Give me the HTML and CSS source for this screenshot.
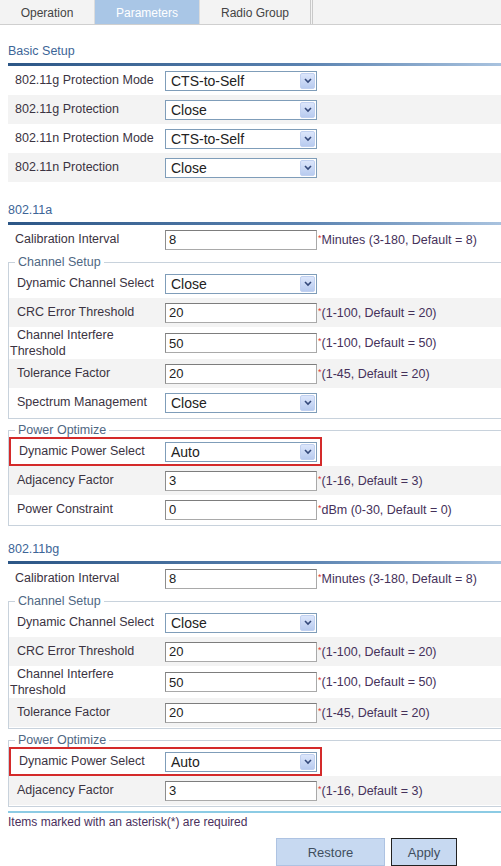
FILE: index.html
```html
<!DOCTYPE html>
<html lang="en">
<head>
  <meta charset="UTF-8">
  <title>Radio Parameters</title>
  <link rel="stylesheet" href="styles.css">
</head>
<body>
  <div class="tabs">
    <a class="tab tab-op">Operation</a>
    <a class="tab tab-param active">Parameters</a>
    <a class="tab tab-group">Radio Group</a>
    <div class="tab-rest"></div>
  </div>

  <div class="main">
    <h2 class="sec-title">Basic Setup</h2>
    <div class="rows">
      <div class="row"><label>802.11g Protection Mode</label><div class="select"><span>CTS-to-Self</span><i class="drop"><svg viewBox="0 0 8 6" width="8" height="6"><path d="M1 1l3 3 3-3" fill="none" stroke="#34497a" stroke-width="1.6"/></svg></i></div></div>
      <div class="row"><label>802.11g Protection</label><div class="select"><span>Close</span><i class="drop"><svg viewBox="0 0 8 6" width="8" height="6"><path d="M1 1l3 3 3-3" fill="none" stroke="#34497a" stroke-width="1.6"/></svg></i></div></div>
      <div class="row"><label>802.11n Protection Mode</label><div class="select"><span>CTS-to-Self</span><i class="drop"><svg viewBox="0 0 8 6" width="8" height="6"><path d="M1 1l3 3 3-3" fill="none" stroke="#34497a" stroke-width="1.6"/></svg></i></div></div>
      <div class="row"><label>802.11n Protection</label><div class="select"><span>Close</span><i class="drop"><svg viewBox="0 0 8 6" width="8" height="6"><path d="M1 1l3 3 3-3" fill="none" stroke="#34497a" stroke-width="1.6"/></svg></i></div></div>
    </div>

    <!-- 802.11a -->
    <h2 class="sec-title">802.11a</h2>
    <div class="row"><label>Calibration Interval</label><input type="text" value="8"><span class="hint"><em>*</em>Minutes (3-180, Default = 8)</span></div>
    <fieldset>
      <legend>Channel Setup</legend>
      <div class="row"><label>Dynamic Channel Select</label><div class="select"><span>Close</span><i class="drop"><svg viewBox="0 0 8 6" width="8" height="6"><path d="M1 1l3 3 3-3" fill="none" stroke="#34497a" stroke-width="1.6"/></svg></i></div></div>
      <div class="row"><label>CRC Error Threshold</label><input type="text" value="20"><span class="hint"><em>*</em>(1-100, Default = 20)</span></div>
      <div class="row"><label class="two">Channel Interfere Threshold</label><input type="text" value="50"><span class="hint"><em>*</em>(1-100, Default = 50)</span></div>
      <div class="row"><label>Tolerance Factor</label><input type="text" value="20"><span class="hint"><em>*</em>(1-45, Default = 20)</span></div>
      <div class="row"><label>Spectrum Management</label><div class="select"><span>Close</span><i class="drop"><svg viewBox="0 0 8 6" width="8" height="6"><path d="M1 1l3 3 3-3" fill="none" stroke="#34497a" stroke-width="1.6"/></svg></i></div></div>
    </fieldset>
    <fieldset>
      <legend>Power Optimize</legend>
      <div class="row mark"><label>Dynamic Power Select</label><div class="select"><span>Auto</span><i class="drop"><svg viewBox="0 0 8 6" width="8" height="6"><path d="M1 1l3 3 3-3" fill="none" stroke="#34497a" stroke-width="1.6"/></svg></i></div></div>
      <div class="row"><label>Adjacency Factor</label><input type="text" value="3"><span class="hint"><em>*</em>(1-16, Default = 3)</span></div>
      <div class="row"><label>Power Constraint</label><input type="text" value="0"><span class="hint"><em>*</em>dBm (0-30, Default = 0)</span></div>
    </fieldset>

    <!-- 802.11bg -->
    <h2 class="sec-title">802.11bg</h2>
    <div class="row"><label>Calibration Interval</label><input type="text" value="8"><span class="hint"><em>*</em>Minutes (3-180, Default = 8)</span></div>
    <fieldset>
      <legend>Channel Setup</legend>
      <div class="row"><label>Dynamic Channel Select</label><div class="select"><span>Close</span><i class="drop"><svg viewBox="0 0 8 6" width="8" height="6"><path d="M1 1l3 3 3-3" fill="none" stroke="#34497a" stroke-width="1.6"/></svg></i></div></div>
      <div class="row"><label>CRC Error Threshold</label><input type="text" value="20"><span class="hint"><em>*</em>(1-100, Default = 20)</span></div>
      <div class="row"><label class="two">Channel Interfere Threshold</label><input type="text" value="50"><span class="hint"><em>*</em>(1-100, Default = 50)</span></div>
      <div class="row"><label>Tolerance Factor</label><input type="text" value="20"><span class="hint"><em>*</em>(1-45, Default = 20)</span></div>
    </fieldset>
    <fieldset>
      <legend>Power Optimize</legend>
      <div class="row mark"><label>Dynamic Power Select</label><div class="select"><span>Auto</span><i class="drop"><svg viewBox="0 0 8 6" width="8" height="6"><path d="M1 1l3 3 3-3" fill="none" stroke="#34497a" stroke-width="1.6"/></svg></i></div></div>
      <div class="row"><label>Adjacency Factor</label><input type="text" value="3"><span class="hint"><em>*</em>(1-16, Default = 3)</span></div>
    </fieldset>

    <div class="note">Items marked with an asterisk(*) are required</div>
    <div class="buttons">
      <button class="btn btn-restore">Restore</button>
      <button class="btn btn-apply">Apply</button>
    </div>
  </div>
</body>
</html>
```

FILE: styles.css
```css
body {
  margin: 0;
  background: #fff;
  font-family: 'Liberation Sans', Arial, sans-serif;
  font-size: 12.5px;
  color: #3b3342;
  overflow: hidden;
}
.tabs {
  display: flex;
  height: 25px;
  background: #f3f3f3;
  border-bottom: 1px solid #cfcfcf;
  box-sizing: border-box;
}
.tab {
  display: flex;
  align-items: center;
  justify-content: center;
  padding-top: 2px;
  font-size: 12px;
  color: #444;
  border-right: 1px solid #dcdcdc;
  box-sizing: border-box;
}
.tab-op { width: 95px; }
.tab-param { width: 105px; }
.tab-group { width: 113px; border-right: 3px double #c9c9c9; }
.tab.active {
  background: #a9c6e6;
  color: #fff;
}
.tab-rest { flex: 1; }

.main { padding-left: 8px; }
.sec-title {
  margin: 21px 0 0 0;
  font-size: 12.5px;
  line-height: 14px;
  font-weight: normal;
  color: #3d6597;
  padding-bottom: 5px;
  border-bottom: 3px solid #3a6290;
  border-image: linear-gradient(to right, #2c5686, #5a82b0 60%, #a9c3df) 1;
}
.main > .sec-title:first-child { margin-top: 19px; }
fieldset + .sec-title { margin-top: 16px; }

.row {
  display: flex;
  align-items: center;
  min-height: 29px;
  background: #fff;
}
.rows .row:nth-child(even),
fieldset .row:nth-of-type(even) { background: #f3f3f3; }
.row label {
  flex: 0 0 157px;
  box-sizing: border-box;
  text-indent: 7px;
  line-height: 15px;
}
.row label.two { line-height: 16px; }
fieldset .row label { flex-basis: 156px; padding-left: 1px; }
fieldset .row.mark label { flex-basis: 154px; }
.row.mark {
  width: 313px;
  box-sizing: border-box;
  border: 2px solid #d42a2a;
  min-height: 29px;
}

fieldset {
  margin: 1px -20px 0 0;
  padding: 0 0 1px 0;
  border: 1px solid #c8d2dc;
}
fieldset + fieldset { margin-top: 4px; }
legend {
  margin-left: 6px;
  padding: 0 3px;
  line-height: 14px;
  color: #4f6783;
}

.select {
  width: 152px;
  height: 20px;
  box-sizing: border-box;
  border: 1px solid #7f9db9;
  display: flex;
  align-items: center;
  background: #fff;
  font-size: 14px;
  color: #222;
}
.select span { flex: 1; padding-left: 5px; }
.drop {
  width: 15px;
  height: 16px;
  margin-right: 1px;
  box-sizing: border-box;
  border: 1px solid #c0d0f0;
  border-radius: 2px;
  background: linear-gradient(#dce6fb, #b8cbef);
  display: flex;
  align-items: center;
  justify-content: center;
}
input {
  width: 152px;
  height: 20px;
  box-sizing: border-box;
  margin: 0;
  padding: 0 3px;
  border: 1px solid #a9a9a9;
  border-top-color: #7d7d7d;
  border-left-color: #8d8d8d;
  font-family: 'Liberation Sans', Arial, sans-serif;
  font-size: 13px;
  color: #222;
}
.hint {
  margin-left: 1px;
  color: #45315a;
  white-space: nowrap;
}
.hint em {
  font-style: normal;
  color: #e03535;
  font-size: 9px;
  vertical-align: top;
  line-height: 10px;
}

.note {
  margin-top: 4px;
  border-top: 2px solid #8ccbe4;
  padding-top: 2px;
  line-height: 14px;
  font-size: 12px;
  color: #4a2f5c;
}
.buttons {
  display: flex;
  gap: 6px;
  padding-left: 268px;
  margin-top: 9px;
}
.btn {
  height: 28px;
  background: #c7d9f1;
  border: 1px solid #aec3e2;
  color: #3f4e5e;
  font-family: 'Liberation Sans', Arial, sans-serif;
  font-size: 13px;
  padding: 0;
}
.btn-restore { width: 109px; }
.btn-apply { width: 66px; border: 1px solid #222; }
```
